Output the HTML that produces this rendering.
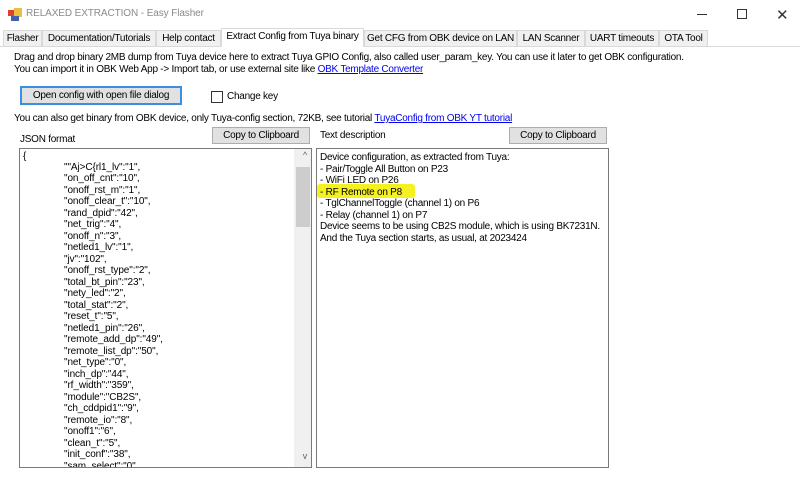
<!DOCTYPE html>
<html><head><meta charset="utf-8"><style>
*{margin:0;padding:0;box-sizing:border-box}
body{width:800px;height:484px;background:#fff;font-family:"Liberation Sans",sans-serif;font-size:10px;letter-spacing:-0.25px;color:#000;position:relative;overflow:hidden}
.a{position:absolute;white-space:nowrap}
.tab{position:absolute;top:30px;height:16px;background:#f0f0f0;border:1px solid #d9d9d9;border-bottom:none;line-height:15px;text-align:center;white-space:nowrap;overflow:hidden}
.btn{position:absolute;background:#e1e1e1;border:1px solid #adadad;text-align:center;white-space:nowrap}
a{color:#0000ee;text-decoration:underline}
.box{position:absolute;border:1px solid #7a7a7a;background:#fff}
.ln{position:absolute;left:44px;white-space:nowrap;letter-spacing:-0.1px}
</style></head><body>
<div class="a" style="left:8px;top:8px;width:14px;height:14px">
<div style="position:absolute;left:0;top:2px;width:7px;height:6px;background:#e04030"></div>
<div style="position:absolute;left:6px;top:0;width:8px;height:9px;background:#e8c040"></div>
<div style="position:absolute;left:3px;top:8px;width:8px;height:5px;background:#4060b0"></div>
</div>
<div class="a" style="left:26px;top:8px;font-size:10px;letter-spacing:-0.1px;color:#8a8a8a">RELAXED EXTRACTION - Easy Flasher</div>
<div class="a" style="left:697px;top:14px;width:10px;height:1px;background:#333"></div>
<div class="a" style="left:737px;top:9px;width:10px;height:10px;border:1px solid #333"></div>
<div class="a" style="left:776px;top:6px;font-size:15px;color:#333">✕</div>
<div class="a" style="left:0;top:46px;width:800px;height:1px;background:#d9d9d9"></div>
<div class="tab" style="left:3px;width:39px">Flasher</div>
<div class="tab" style="left:42px;width:114px">Documentation/Tutorials</div>
<div class="tab" style="left:156px;width:65px">Help contact</div>
<div class="tab" style="left:221px;top:28px;height:19px;width:143px;background:#fff">Extract Config from Tuya binary</div>
<div class="tab" style="left:364px;width:153px">Get CFG from OBK device on LAN</div>
<div class="tab" style="left:517px;width:68px">LAN Scanner</div>
<div class="tab" style="left:585px;width:74px">UART timeouts</div>
<div class="tab" style="left:659px;width:49px">OTA Tool</div>
<div class="a" style="left:14px;top:52px">Drag and drop binary 2MB dump from Tuya device here to extract Tuya GPIO Config, also called user_param_key. You can use it later to get OBK configuration.</div>
<div class="a" style="left:14px;top:64px">You can import it in OBK Web App -&gt; Import tab, or use external site like <a>OBK Template Converter</a></div>
<div class="btn" style="left:20px;top:86px;width:162px;height:19px;border:2px solid #3c8ee0;line-height:15px">Open config with open file dialog</div>
<div class="a" style="left:211px;top:91px;width:12px;height:12px;border:1px solid #333;background:#fff"></div>
<div class="a" style="left:227px;top:91px">Change key</div>
<div class="a" style="left:14px;top:113px">You can also get binary from OBK device, only Tuya-config section, 72KB, see tutorial <a>TuyaConfig from OBK YT tutorial</a></div>
<div class="a" style="left:20px;top:134px">JSON format</div>
<div class="btn" style="left:212px;top:127px;width:98px;height:17px;line-height:15px">Copy to Clipboard</div>
<div class="a" style="left:320px;top:130px">Text description</div>
<div class="btn" style="left:509px;top:127px;width:98px;height:17px;line-height:15px">Copy to Clipboard</div>
<div class="box" style="left:19px;top:148px;width:293px;height:320px;overflow:hidden">
<div class="a" style="left:3px;top:2px">{</div>
<div class="a" style="right:0;top:0;width:17px;height:318px;background:#f0f0f0"></div>
<div class="a" style="right:1px;top:18px;width:14px;height:60px;background:#cdcdcd"></div>
<div class="a" style="right:4px;top:1px;font-size:9px;color:#606060">^</div>
<div class="a" style="right:4px;top:302px;font-size:9px;color:#606060">v</div>
<div class="ln" style="top:13px">""Aj&gt;C{rl1_lv":"1",</div>
<div class="ln" style="top:24px">"on_off_cnt":"10",</div>
<div class="ln" style="top:36px">"onoff_rst_m":"1",</div>
<div class="ln" style="top:47px">"onoff_clear_t":"10",</div>
<div class="ln" style="top:59px">"rand_dpid":"42",</div>
<div class="ln" style="top:70px">"net_trig":"4",</div>
<div class="ln" style="top:82px">"onoff_n":"3",</div>
<div class="ln" style="top:93px">"netled1_lv":"1",</div>
<div class="ln" style="top:105px">"jv":"102",</div>
<div class="ln" style="top:116px">"onoff_rst_type":"2",</div>
<div class="ln" style="top:128px">"total_bt_pin":"23",</div>
<div class="ln" style="top:139px">"nety_led":"2",</div>
<div class="ln" style="top:151px">"total_stat":"2",</div>
<div class="ln" style="top:162px">"reset_t":"5",</div>
<div class="ln" style="top:174px">"netled1_pin":"26",</div>
<div class="ln" style="top:185px">"remote_add_dp":"49",</div>
<div class="ln" style="top:197px">"remote_list_dp":"50",</div>
<div class="ln" style="top:208px">"net_type":"0",</div>
<div class="ln" style="top:220px">"inch_dp":"44",</div>
<div class="ln" style="top:231px">"rf_width":"359",</div>
<div class="ln" style="top:243px">"module":"CB2S",</div>
<div class="ln" style="top:254px">"ch_cddpid1":"9",</div>
<div class="ln" style="top:266px">"remote_io":"8",</div>
<div class="ln" style="top:277px">"onoff1":"6",</div>
<div class="ln" style="top:289px">"clean_t":"5",</div>
<div class="ln" style="top:300px">"init_conf":"38",</div>
<div class="ln" style="top:312px">"sam_select":"0",</div>
</div>
<div class="box" style="left:316px;top:148px;width:293px;height:320px;overflow:hidden">
<div class="a" style="left:0;top:35px;width:98px;height:14px;background:#f5f020;border-radius:3px"></div>
<div class="a" style="left:3px;top:3px;line-height:11.5px">Device configuration, as extracted from Tuya:<br>- Pair/Toggle All Button on P23<br>- WiFi LED on P26<br>- RF Remote on P8<br>- TglChannelToggle (channel 1) on P6<br>- Relay (channel 1) on P7<br>Device seems to be using CB2S module, which is using BK7231N.<br>And the Tuya section starts, as usual, at 2023424</div>
</div>
</body></html>
